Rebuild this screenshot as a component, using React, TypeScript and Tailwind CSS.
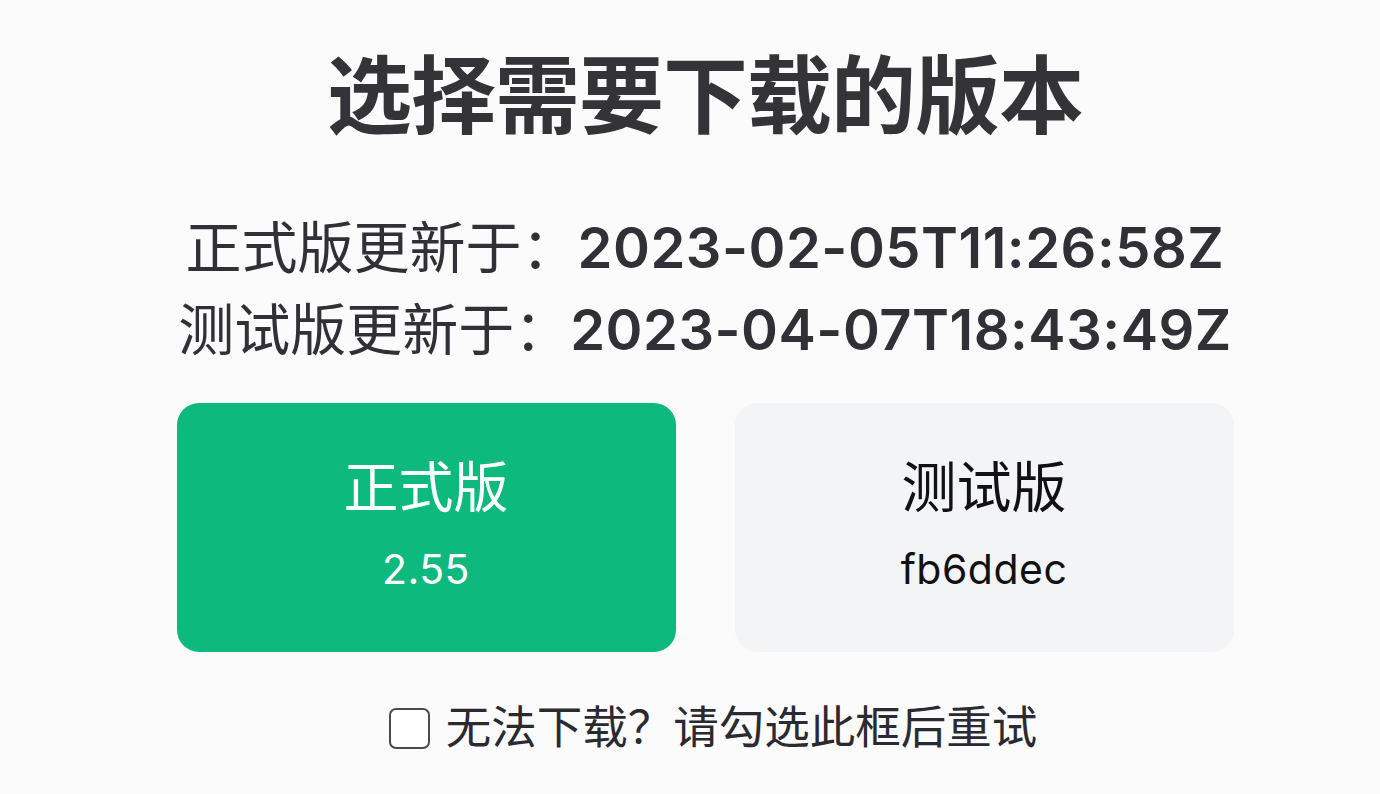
import { useState } from 'react';

const cjk = { fontFamily: '"Inter", "Noto Sans CJK SC", sans-serif' };

export default function App() {
  const [channel, setChannel] = useState<'stable' | 'beta'>('stable');
  const [retry, setRetry] = useState(false);

  const versions = [
    { id: 'stable' as const, name: '正式版', tag: '2.55' },
    { id: 'beta' as const, name: '测试版', tag: 'fb6ddec' },
  ];

  return (
    <div className="min-h-screen w-full bg-[#fbfbfc] text-[#303036]" style={cjk}>
      <div className="flex flex-col items-center pt-[47px] pl-[30px]">
        <h1 className="text-[85px] leading-[100px] font-bold tracking-[-1px] text-[#333338]">
          选择需要下载的版本
        </h1>

        {/* update times */}
        <div className="mt-[60px] flex flex-col items-center text-[56px] leading-[82px]">
          <p>
            正式版更新于：<span className="font-semibold tracking-[0.5px]">2023-02-05T11:26:58Z</span>
          </p>
          <p>
            测试版更新于：<span className="font-semibold tracking-[0.5px]">2023-04-07T18:43:49Z</span>
          </p>
        </div>

        {/* version buttons */}
        <div className="mt-[32px] flex gap-[59px]">
          {versions.map((v) => {
            const active = channel === v.id;
            return (
              <button
                key={v.id}
                onClick={() => setChannel(v.id)}
                className={`w-[499px] h-[249px] rounded-[22px] flex flex-col items-center justify-center ${
                  active ? 'bg-[#0eb97d] text-white' : 'bg-[#f3f4f6] text-[#111114]'
                }`}
              >
                <span className="text-[55px] leading-[82px]">{v.name}</span>
                <span className="text-[41px] leading-[82px] tracking-[0.5px]">{v.tag}</span>
              </button>
            );
          })}
        </div>

        {/* fallback checkbox */}
        <label className="mt-[51px] ml-[16px] flex items-center gap-[16px] cursor-pointer">
          <span
            onClick={() => setRetry(!retry)}
            className={`w-[41px] h-[41px] rounded-[7px] border-[2.5px] border-[#4a4a50] ${retry ? 'bg-[#0eb97d]' : 'bg-white'}`}
          />
          <span className="text-[45.5px] leading-[50px] text-[#2a2a30]">无法下载？请勾选此框后重试</span>
        </label>
      </div>
    </div>
  );
}
